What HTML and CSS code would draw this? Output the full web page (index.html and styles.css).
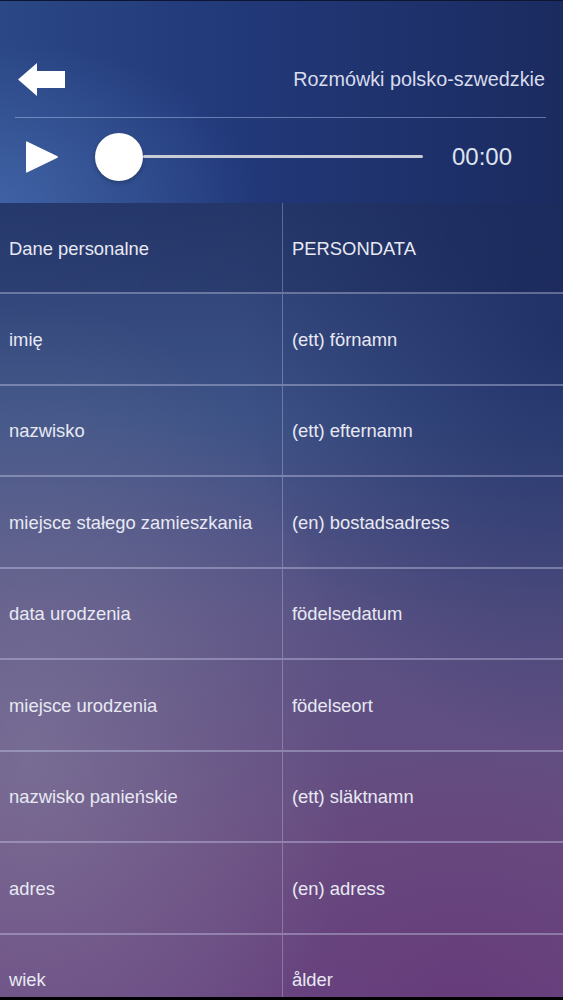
FILE: index.html
```html
<!DOCTYPE html>
<html lang="pl">
<head>
<meta charset="utf-8">
<title>Rozmówki polsko-szwedzkie</title>
<link rel="stylesheet" href="styles.css">
</head>
<body>
<div class="app">
  <header class="header">
    <div class="topbar">
      <svg class="back" width="48" height="34" viewBox="0 0 48 34" aria-label="back">
        <path d="M0 16.5 L19 0 L19 8 L47 8 L47 25 L19 25 L19 33 Z" fill="#fff"/>
      </svg>
      <div class="title">Rozmówki polsko-szwedzkie</div>
    </div>
    <div class="player">
      <svg class="play" width="33" height="34" viewBox="0 0 33 34" aria-label="play">
        <path d="M2 2 Q0 0 0 3 L0 31 Q0 34 2 32 L31 18 Q33 17 31 16 Z" fill="#fff"/>
      </svg>
      <div class="slider">
        <div class="knob"></div>
        <div class="track"></div>
      </div>
      <div class="time">00:00</div>
    </div>
  </header>
  <main class="table">
    <div class="row head"><div class="cell">Dane personalne</div><div class="cell">PERSONDATA</div></div>
    <div class="row"><div class="cell">imię</div><div class="cell">(ett) förnamn</div></div>
    <div class="row"><div class="cell">nazwisko</div><div class="cell">(ett) efternamn</div></div>
    <div class="row"><div class="cell">miejsce stałego zamieszkania</div><div class="cell">(en) bostadsadress</div></div>
    <div class="row"><div class="cell">data urodzenia</div><div class="cell">födelsedatum</div></div>
    <div class="row"><div class="cell">miejsce urodzenia</div><div class="cell">födelseort</div></div>
    <div class="row"><div class="cell">nazwisko panieńskie</div><div class="cell">(ett) släktnamn</div></div>
    <div class="row"><div class="cell">adres</div><div class="cell">(en) adress</div></div>
    <div class="row"><div class="cell">wiek</div><div class="cell">ålder</div></div>
  </main>
</div>
</body>
</html>
```

FILE: styles.css
```css
html, body {
  margin: 0;
  padding: 0;
  background: #000;
}
body {
  font-family: "Liberation Sans", Arial, sans-serif;
  color: #e6e8f2;
}
.app {
  width: 563px;
  height: 997px;
  overflow: hidden;
  border-top: 1px solid #0d1630;
  box-sizing: border-box;
  display: flex;
  flex-direction: column;
  background:
    radial-gradient(ellipse 320px 460px at 30px 760px, rgba(145, 145, 170, 0.45), rgba(145, 145, 170, 0) 100%),
    radial-gradient(ellipse 320px 420px at 560px 330px, rgba(25, 40, 95, 0.7), rgba(25, 40, 95, 0) 100%),
    radial-gradient(ellipse 260px 260px at 460px 1000px, rgba(100, 50, 115, 0.45), rgba(100, 50, 115, 0) 100%),
    linear-gradient(to bottom, #26396f 15%, #3d5286 42%, #5a5284 62%, #684b80 85%, #684580 100%);
}
.header {
  height: 202px;
  flex: none;
  box-sizing: border-box;
  padding: 0 17px 0 15px;
  background:
    radial-gradient(ellipse 260px 160px at 0px 200px, rgba(80, 120, 190, 0.55), rgba(80, 120, 190, 0) 100%),
    linear-gradient(to right, #2b4785 0%, #22397a 40%, #1b2b60 100%);
  display: flex;
  flex-direction: column;
}
.topbar {
  height: 117px;
  box-sizing: border-box;
  padding-top: 62px;
  border-bottom: 1px solid rgba(170, 190, 230, 0.5);
  display: flex;
  justify-content: space-between;
  align-items: flex-start;
}
.back {
  margin-left: 3px;
  display: block;
}
.title {
  font-size: 19.8px;
  color: #d8dcec;
  margin-top: 5px;
  margin-right: 1px;
}
.player {
  flex: 1;
  display: flex;
  align-items: center;
  padding-left: 11px;
  padding-bottom: 8px;
}
.play {
  display: block;
  flex: none;
}
.slider {
  display: flex;
  align-items: center;
  margin-left: 36px;
  width: 328px;
}
.knob {
  width: 48px;
  height: 48px;
  border-radius: 50%;
  background: #fff;
  flex: none;
  box-shadow: 0 2px 4px rgba(0, 0, 0, 0.25);
}
.track {
  flex: 1;
  height: 3px;
  background: #c9ccd6;
  border-radius: 2px;
}
.time {
  margin-left: 29px;
  font-size: 24px;
  color: #dfe3f0;
}
.table {
  flex: 1;
  display: flex;
  flex-direction: column;
}
.row {
  flex: none;
  height: 91.5px;
  box-sizing: border-box;
  display: grid;
  grid-template-columns: 282px 1fr;
  border-bottom: 2px solid rgba(200, 205, 235, 0.4);
}
.row.head {
  height: 91px;
  background: linear-gradient(to right, rgba(20, 35, 80, 0.2), rgba(15, 25, 65, 0.3));
}
.cell {
  display: flex;
  align-items: center;
  font-size: 18.4px;
  color: #e8e9f3;
  padding-left: 9px;
  padding-top: 2px;
}
.cell + .cell {
  border-left: 1px solid rgba(200, 205, 235, 0.35);
  padding-left: 9px;
}
```
